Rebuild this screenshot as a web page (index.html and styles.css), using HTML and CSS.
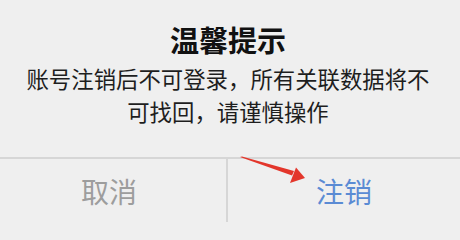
FILE: index.html
```html
<!DOCTYPE html>
<html lang="zh-CN">
<head>
<meta charset="utf-8">
<title>温馨提示</title>
<link rel="stylesheet" href="styles.css">
</head>
<body>
<div class="dialog">
  <div class="content">
    <div class="title">温馨提示</div>
    <div class="message">账号注销后不可登录，所有关联数据将不可找回，请谨慎操作</div>
  </div>
  <div class="actions">
    <div class="btn cancel">取消</div>
    <div class="sep"></div>
    <div class="btn confirm">注销</div>
  </div>
  <svg class="arrow" width="460" height="222" viewBox="0 0 460 222" aria-hidden="true">
    <polygon points="240,157 242,156.5 294,171 292,175.5" fill="#e3362b"/>
    <polygon points="305,178 296,167.5 290,183" fill="#e3362b"/>
  </svg>
</div>
</body>
</html>
```
FILE: styles.css
```css
html, body {
  margin: 0;
  padding: 0;
  background: #efefef;
}
body {
  font-family: "Noto Sans CJK SC", "Noto Sans", sans-serif;
  width: 460px;
  height: 222px;
  overflow: hidden;
}
.dialog {
  position: relative;
  display: flex;
  flex-direction: column;
  height: 222px;
}
.content {
  display: flex;
  flex-direction: column;
  align-items: center;
  padding: 19px 28px 0 24px;
  height: 138px;
  box-sizing: border-box;
}
.title {
  font-size: 29px;
  line-height: 40px;
  font-weight: 700;
  color: #111;
}
.message {
  margin-top: 3px;
  font-size: 22.4px;
  line-height: 33px;
  color: #1e1e1e;
  text-align: center;
}
.actions {
  display: flex;
  border-top: 2px solid #d6d6d6;
  margin-top: 19px;
  flex: 1;
}
.btn {
  display: flex;
  align-items: center;
  justify-content: center;
  font-size: 28px;
  padding-bottom: 0;
}
.cancel {
  width: 226px;
  color: #9d9d9d;
  padding-right: 8px;
  box-sizing: border-box;
}
.sep {
  width: 2px;
  background: #d6d6d6;
}
.confirm {
  flex: 1;
  color: #5b8bd4;
}
.arrow {
  position: absolute;
  left: 0;
  top: 0;
  pointer-events: none;
}
```
